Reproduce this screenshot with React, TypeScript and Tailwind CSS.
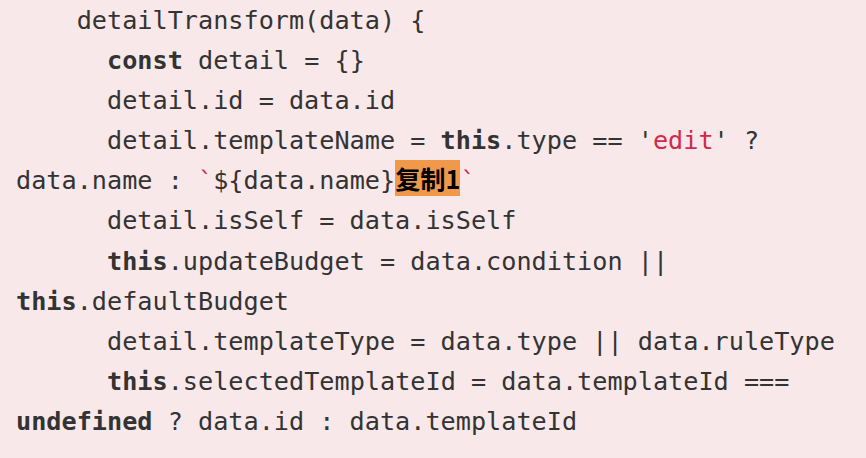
const B = ({ children }: { children: React.ReactNode }) => (
  <span className="font-bold">{children}</span>
);

const R = ({ children }: { children: React.ReactNode }) => (
  <span className="text-[#d3294b]">{children}</span>
);

export default function App() {
  return (
    <main className="w-[866px] h-[458px] bg-[#f8e8e9] text-[#333333]">
      <pre
        className="pl-4 pt-[1px] text-[25.2px] leading-[40.1px] whitespace-pre"
        style={{ fontFamily: '"DejaVu Sans Mono", "Noto Sans CJK SC", monospace' }}
      >
        <div>{"    detailTransform(data) {"}</div>
        <div>
          {"      "}
          <B>const</B>
          {" detail = {}"}
        </div>
        <div>{"      detail.id = data.id"}</div>
        <div>
          {"      detail.templateName = "}
          <B>this</B>
          {".type == '"}
          <R>edit</R>
          {"' ?"}
        </div>
        <div className="h-[40.1px]">
          {"data.name : "}
          <R>`</R>
          {"${data.name}"}
          <span
            className="bg-[#f0994b] font-bold text-black leading-none"
            style={{ fontFamily: '"Noto Sans CJK SC", sans-serif' }}
          >
            复制1
          </span>
          <R>`</R>
        </div>
        <div>{"      detail.isSelf = data.isSelf"}</div>
        <div>
          {"      "}
          <B>this</B>
          {".updateBudget = data.condition ||"}
        </div>
        <div>
          <B>this</B>
          {".defaultBudget"}
        </div>
        <div>{"      detail.templateType = data.type || data.ruleType"}</div>
        <div>
          {"      "}
          <B>this</B>
          {".selectedTemplateId = data.templateId ==="}
        </div>
        <div>
          <B>undefined</B>
          {" ? data.id : data.templateId"}
        </div>
      </pre>
    </main>
  );
}
